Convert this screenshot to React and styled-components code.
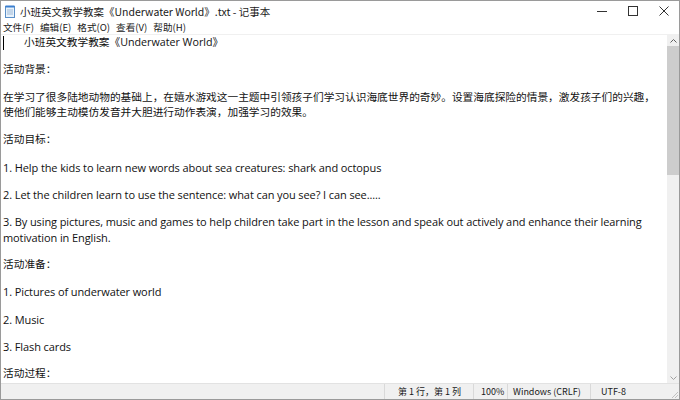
import React from "react";
import styled, { createGlobalStyle } from "styled-components";

const Global = createGlobalStyle`
  html, body {
    margin: 0;
    padding: 0;
    background: #ffffff;
  }
`;

const Window = styled.div`
  width: 680px;
  height: 400px;
  box-sizing: border-box;
  border: 1px solid #9a9a9a;
  display: flex;
  flex-direction: column;
  background: #ffffff;
  overflow: hidden;
`;

const TitleBar = styled.div`
  height: 20px;
  display: flex;
  align-items: center;
  padding-left: 4px;
  font-family: "Noto Sans CJK SC", "Open Sans", sans-serif;
  font-size: 10.5px;
  color: #1a1a1a;
`;

const TitleText = styled.span`
  margin-left: 4px;
  flex: 1;
  white-space: nowrap;
`;

const Controls = styled.div`
  display: flex;
  height: 100%;
`;

const ControlButton = styled.div`
  width: 31px;
  height: 100%;
  display: flex;
  align-items: center;
  justify-content: center;
`;

const MenuBar = styled.div`
  height: 12px;
  display: flex;
  align-items: center;
  gap: 6px;
  padding-left: 2px;
  padding-bottom: 1px;
  border-bottom: 1px solid #f0f0f0;
  font-family: "Noto Sans CJK SC", "Open Sans", sans-serif;
  font-size: 9.6px;
  color: #1a1a1a;
`;

const MenuItem = styled.span`
  white-space: nowrap;
`;

const Body = styled.div`
  flex: 1;
  display: flex;
  min-height: 0;
`;

const Editor = styled.div`
  flex: 1;
  position: relative;
  padding: 0 6px 0 2px;
  font-family: "Open Sans", "Noto Sans CJK SC", sans-serif;
  font-size: 10.7px;
  line-height: 15.5px;
  color: #111111;
  overflow: hidden;
`;

const Caret = styled.div`
  position: absolute;
  left: 2px;
  top: 1px;
  width: 1px;
  height: 14px;
  background: #000000;
`;

const Line = styled.p`
  margin: 0 0 11.8px 0;
  padding-left: ${(p) => (p.$indent ? "21px" : "0")};
  font-size: ${(p) => (p.$latin ? "11px" : "inherit")};
  letter-spacing: ${(p) => (p.$latin ? "-0.1px" : "0")};
`;

const ScrollTrack = styled.div`
  width: 12px;
  background: #f0f0f0;
  display: flex;
  flex-direction: column;
  align-items: stretch;
`;

const ScrollArrow = styled.div`
  height: 11px;
  display: flex;
  align-items: center;
  justify-content: center;
`;

const ScrollThumb = styled.div`
  height: 129px;
  background: #cdcdcd;
`;

const ScrollSpace = styled.div`
  flex: 1;
`;

const StatusBar = styled.div`
  height: 15px;
  border-top: 1px solid #e2e2e2;
  background: #f0f0f0;
  display: flex;
  align-items: center;
  font-family: "Noto Sans CJK SC", "Open Sans", sans-serif;
  font-size: 9px;
  color: #1a1a1a;
`;

const StatusSpacer = styled.div`
  flex: 1;
`;

const StatusPanel = styled.div`
  width: ${(p) => p.$w}px;
  height: 100%;
  display: flex;
  align-items: center;
  box-sizing: border-box;
  padding-left: ${(p) => p.$pad}px;
  border-left: 1px solid #d9d9d9;
  white-space: nowrap;
`;

const Grip = styled.div`
  width: 12px;
  height: 100%;
  display: flex;
  align-items: flex-end;
  justify-content: flex-end;
`;

const NotepadIcon = () => (
  <svg width="11" height="13" viewBox="0 0 11 13">
    <rect x="0.5" y="1.5" width="9" height="11" fill="#e8f2fb" stroke="#5b8fc7" />
    <rect x="0.5" y="0.5" width="9" height="2" fill="#3b7fd0" />
    <line x1="2" y1="5" x2="8" y2="5" stroke="#9db8d6" />
    <line x1="2" y1="7" x2="8" y2="7" stroke="#9db8d6" />
    <line x1="2" y1="9" x2="8" y2="9" stroke="#9db8d6" />
  </svg>
);

const paragraphs = [
  { text: "活动背景：" },
  {
    text:
      "在学习了很多陆地动物的基础上，在嬉水游戏这一主题中引领孩子们学习认识海底世界的奇妙。设置海底探险的情景，激发孩子们的兴趣，使他们能够主动模仿发音并大胆进行动作表演，加强学习的效果。",
  },
  { text: "活动目标：" },
  { text: "1. Help the kids to learn new words about sea creatures: shark and octopus", latin: true },
  { text: "2. Let the children learn to use the sentence: what can you see? I can see.....", latin: true },
  {
    text:
      "3. By using pictures, music and games to help children take part in the lesson and speak out actively and enhance their learning motivation in English.",
    latin: true,
  },
  { text: "活动准备：" },
  { text: "1. Pictures of underwater world", latin: true },
  { text: "2. Music", latin: true },
  { text: "3. Flash cards", latin: true },
  { text: "活动过程：" },
];

export default function App() {
  return (
    <>
      <Global />
      <Window>
        <TitleBar>
          <NotepadIcon />
          <TitleText>小班英文教学教案《Underwater World》.txt - 记事本</TitleText>
          <Controls>
            <ControlButton>
              <svg width="10" height="10" viewBox="0 0 10 10">
                <line x1="0" y1="5.5" x2="10" y2="5.5" stroke="#333" strokeWidth="1" />
              </svg>
            </ControlButton>
            <ControlButton>
              <svg width="10" height="10" viewBox="0 0 10 10">
                <rect x="0.5" y="0.5" width="9" height="9" fill="none" stroke="#333" strokeWidth="1" />
              </svg>
            </ControlButton>
            <ControlButton>
              <svg width="10" height="10" viewBox="0 0 10 10">
                <path d="M0.5 0.5 L9.5 9.5 M9.5 0.5 L0.5 9.5" stroke="#333" strokeWidth="1" />
              </svg>
            </ControlButton>
          </Controls>
        </TitleBar>
        <MenuBar>
          <MenuItem>文件(F)</MenuItem>
          <MenuItem>编辑(E)</MenuItem>
          <MenuItem>格式(O)</MenuItem>
          <MenuItem>查看(V)</MenuItem>
          <MenuItem>帮助(H)</MenuItem>
        </MenuBar>
        <Body>
          <Editor>
            <Caret />
            <Line $indent>小班英文教学教案《Underwater World》</Line>
            {paragraphs.map((p, i) => (
              <Line key={i} $latin={p.latin}>
                {p.text}
              </Line>
            ))}
          </Editor>
          <ScrollTrack>
            <ScrollArrow>
              <svg width="7" height="4" viewBox="0 0 7 4">
                <path d="M0.5 3.5 L3.5 0.5 L6.5 3.5" fill="none" stroke="#606060" />
              </svg>
            </ScrollArrow>
            <ScrollThumb />
            <ScrollSpace />
            <ScrollArrow>
              <svg width="7" height="4" viewBox="0 0 7 4">
                <path d="M0.5 0.5 L3.5 3.5 L6.5 0.5" fill="none" stroke="#a0a0a0" />
              </svg>
            </ScrollArrow>
          </ScrollTrack>
        </Body>
        <StatusBar>
          <StatusSpacer />
          <StatusPanel $w={89} $pad={13}>第 1 行，第 1 列</StatusPanel>
          <StatusPanel $w={34} $pad={7}>100%</StatusPanel>
          <StatusPanel $w={83} $pad={5}>Windows (CRLF)</StatusPanel>
          <StatusPanel $w={77} $pad={10}>UTF-8</StatusPanel>
          <Grip>
            <svg width="8" height="8" viewBox="0 0 8 8">
              <path d="M7 1 L1 7 M7 4 L4 7" stroke="#c0c0c0" />
            </svg>
          </Grip>
        </StatusBar>
      </Window>
    </>
  );
}
